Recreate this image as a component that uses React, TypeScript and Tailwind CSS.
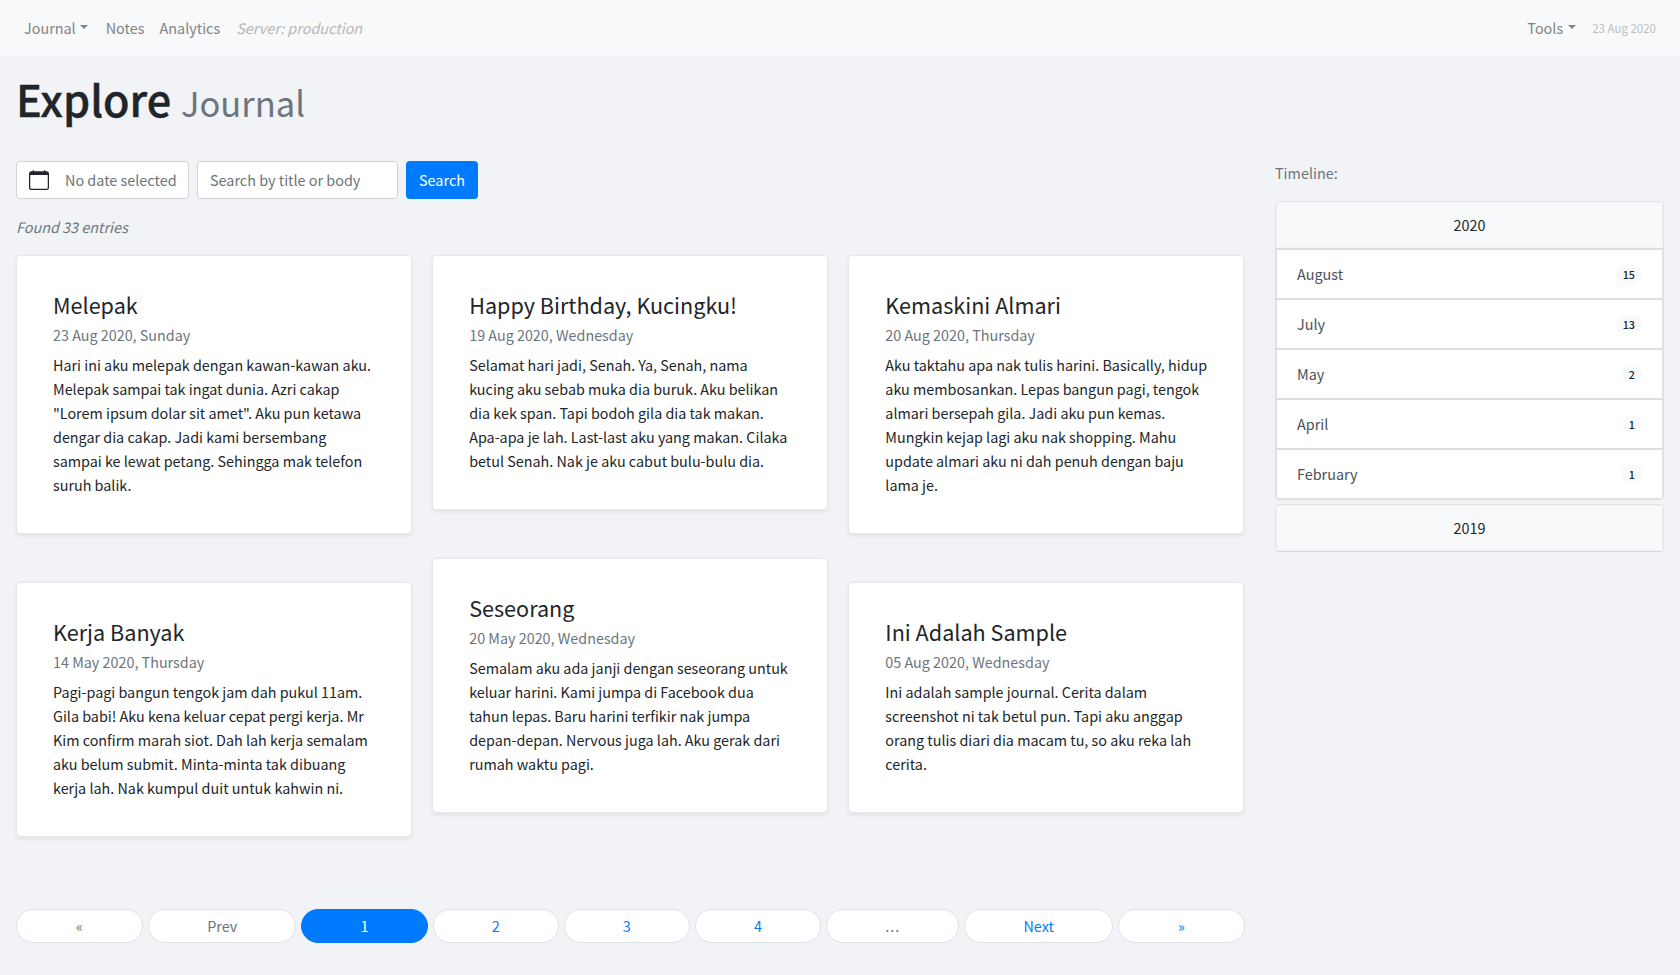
import { BsCalendar } from "react-icons/bs";

type Entry = { title: string; date: string; body: string };

const columns: Entry[][] = [
  [
    {
      title: "Melepak",
      date: "23 Aug 2020, Sunday",
      body: "Hari ini aku melepak dengan kawan-kawan aku. Melepak sampai tak ingat dunia. Azri cakap \"Lorem ipsum dolar sit amet\". Aku pun ketawa dengar dia cakap. Jadi kami bersembang sampai ke lewat petang. Sehingga mak telefon suruh balik.",
    },
    {
      title: "Kerja Banyak",
      date: "14 May 2020, Thursday",
      body: "Pagi-pagi bangun tengok jam dah pukul 11am. Gila babi! Aku kena keluar cepat pergi kerja. Mr Kim confirm marah siot. Dah lah kerja semalam aku belum submit. Minta-minta tak dibuang kerja lah. Nak kumpul duit untuk kahwin ni.",
    },
  ],
  [
    {
      title: "Happy Birthday, Kucingku!",
      date: "19 Aug 2020, Wednesday",
      body: "Selamat hari jadi, Senah. Ya, Senah, nama kucing aku sebab muka dia buruk. Aku belikan dia kek span. Tapi bodoh gila dia tak makan. Apa-apa je lah. Last-last aku yang makan. Cilaka betul Senah. Nak je aku cabut bulu-bulu dia.",
    },
    {
      title: "Seseorang",
      date: "20 May 2020, Wednesday",
      body: "Semalam aku ada janji dengan seseorang untuk keluar harini. Kami jumpa di Facebook dua tahun lepas. Baru harini terfikir nak jumpa depan-depan. Nervous juga lah. Aku gerak dari rumah waktu pagi.",
    },
  ],
  [
    {
      title: "Kemaskini Almari",
      date: "20 Aug 2020, Thursday",
      body: "Aku taktahu apa nak tulis harini. Basically, hidup aku membosankan. Lepas bangun pagi, tengok almari bersepah gila. Jadi aku pun kemas. Mungkin kejap lagi aku nak shopping. Mahu update almari aku ni dah penuh dengan baju lama je.",
    },
    {
      title: "Ini Adalah Sample",
      date: "05 Aug 2020, Wednesday",
      body: "Ini adalah sample journal. Cerita dalam screenshot ni tak betul pun. Tapi aku anggap orang tulis diari dia macam tu, so aku reka lah cerita.",
    },
  ],
];

const months = [
  ["August", "15"],
  ["July", "13"],
  ["May", "2"],
  ["April", "1"],
  ["February", "1"],
];

const pages = [
  { label: "«", cls: "px-[1px] border-[#dee2e6] bg-white text-[#6c757d]" },
  { label: "Prev", cls: "border-[#dee2e6] bg-white text-[#6c757d]" },
  { label: "1", cls: "border-[#007bff] bg-[#007bff] text-white" },
  { label: "2", cls: "border-[#dee2e6] bg-white text-[#007bff]" },
  { label: "3", cls: "border-[#dee2e6] bg-white text-[#007bff]" },
  { label: "4", cls: "border-[#dee2e6] bg-white text-[#007bff]" },
  { label: "...", cls: "tracking-[1px] border-[#dee2e6] bg-white text-[#6c757d]" },
  { label: "Next", cls: "border-[#dee2e6] bg-white text-[#007bff]" },
  { label: "»", cls: "px-[1px] border-[#dee2e6] bg-white text-[#007bff]" },
];

function Caret() {
  return (
    <span className="mb-[3px] ml-[4px] inline-block border-x-[4.5px] border-t-[4.5px] border-x-transparent border-t-[#7f8488]" />
  );
}

function Card({ entry }: { entry: Entry }) {
  return (
    <div className="rounded border border-[#e6e7e9] bg-white p-9 shadow-[0_2px_4px_rgba(0,0,0,0.075)]">
      <h4 className="mb-[5px] text-[21.6px] leading-[26px] font-normal text-[#212529]">{entry.title}</h4>
      <div className="mb-[6px] text-[14.35px] text-[#6c757d]">{entry.date}</div>
      <p className="-mr-[2px] text-[14.35px] text-[#212529]">{entry.body}</p>
    </div>
  );
}

function YearHead({ year }: { year: string }) {
  return (
    <div className="flex h-[46px] items-center justify-center border-2 border-[#f4f5f7] bg-[#f8f9fa] text-[#212529]">
      {year}
    </div>
  );
}

export default function App() {
  return (
    <div className="min-h-[975px] bg-[#f1f3f7] font-['Noto_Sans_CJK_SC','Noto_Sans',sans-serif] text-[14.4px] leading-6">
      <nav className="flex h-[56px] items-center justify-between bg-[#f8f9fa] px-6">
        <div className="flex items-center text-[#7f8488]">
          <span className="flex items-center">
            Journal
            <Caret />
          </span>
          <span className="ml-[18px]">Notes</span>
          <span className="ml-[15px]">Analytics</span>
          <span className="ml-4 text-[#b4b6b9] italic">Server: production</span>
        </div>
        <div className="flex items-center text-[#7f8488]">
          <span className="flex items-center">
            <span className="mr-px">Tools</span>
            <Caret />
          </span>
          <span className="ml-4 text-[11.5px] text-[#bcbfc2]">23 Aug 2020</span>
        </div>
      </nav>

      <main className="flex gap-[31px] px-4">
        <div className="w-[1228px] shrink-0">
          <h1 className="mt-[16px] text-[43.2px] leading-[52px] font-medium text-[#212529] [-webkit-text-stroke:0.4px_#212529]">
            Explore{" "}
            <small className="text-[34.56px] leading-none font-normal text-[#6c757d] [-webkit-text-stroke:0]">
              Journal
            </small>
          </h1>

          <form className="mt-[37px] flex gap-2">
            <div className="flex h-[38px] w-[173px] items-center rounded border border-[#ced4da] bg-white pl-3 text-[#6c757d]">
              <BsCalendar className="h-5 w-5 shrink-0 text-[#212529]" />
              <span className="ml-[16px] whitespace-nowrap">No date selected</span>
            </div>
            <input
              className="h-[38px] w-[201px] rounded border border-[#ced4da] bg-white px-3 pb-[1px] text-[#495057] placeholder:text-[#6c757d]"
              placeholder="Search by title or body"
            />
            <button type="button" className="h-[38px] w-[72px] rounded bg-[#007bff] text-white">
              Search
            </button>
          </form>

          <p className="mt-[16px] text-[#6c757d] italic">Found 33 entries</p>

          <div className="mt-[16px] flex items-start gap-[20.5px]">
            {columns.map((col) => (
              <div key={col[0].title} className="flex w-[396px] flex-col gap-[48px]">
                {col.map((entry) => (
                  <Card key={entry.title} entry={entry} />
                ))}
              </div>
            ))}
          </div>

          <div className="mt-[72px] -mr-px flex gap-[5px]">
            {pages.map((p) => (
              <a
                key={p.label}
                className={`flex h-[34px] grow items-center justify-center rounded-full border ${p.cls}`}
              >
                {p.label}
              </a>
            ))}
          </div>
        </div>

        <aside className="flex-1 pt-[105px]">
          <div className="text-[#6c757d]">Timeline:</div>
          <div className="mt-[16px] overflow-hidden rounded border border-[#dfe1e4]">
            <YearHead year="2020" />
            {months.map(([name, count]) => (
              <div
                key={name}
                className="flex h-[50px] items-center justify-between border-x border-t-2 border-[#dddddd] bg-white px-[20px] text-[#495057] last:h-[51px] last:border-b"
              >
                <span>{name}</span>
                <span className="rounded-full bg-[#f8f9fa] px-[7px] text-[10.8px] leading-[18px] font-medium text-[#212529]">
                  {count}
                </span>
              </div>
            ))}
          </div>
          <div className="mt-[4px] overflow-hidden rounded border border-[#dfe1e4] border-b-[#d6d8da]">
            <YearHead year="2019" />
          </div>
        </aside>
      </main>
    </div>
  );
}
